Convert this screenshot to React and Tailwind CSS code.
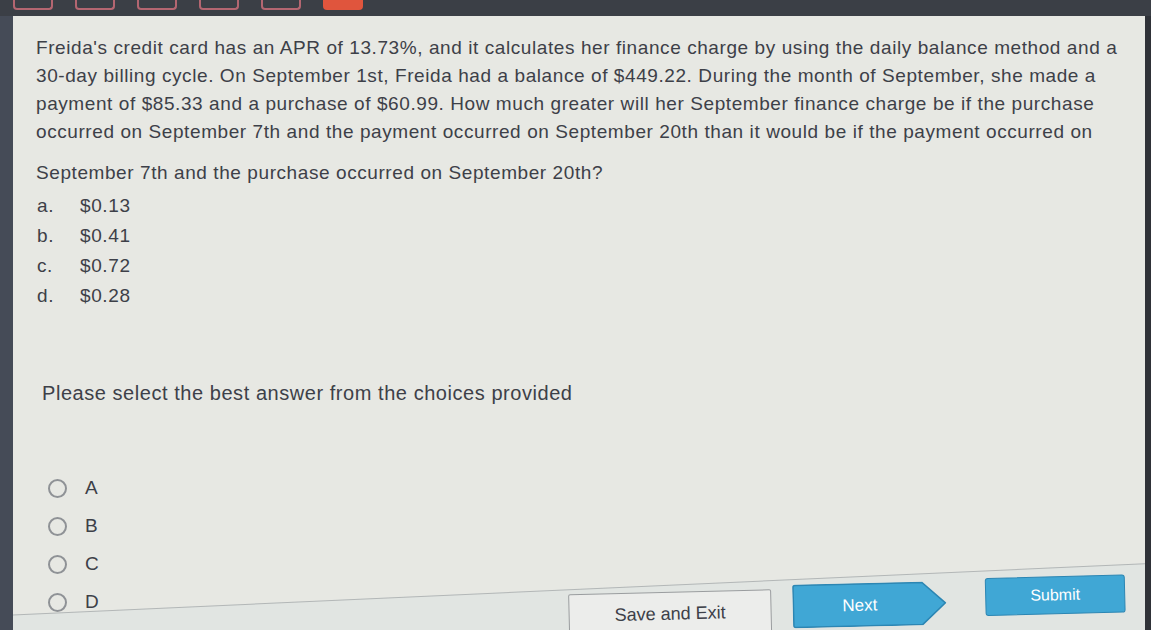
import React from "react";

const lines = [
    "Freida's credit card has an APR of 13.73%, and it calculates her finance charge by using the daily balance method and a",
    "30-day billing cycle. On September 1st, Freida had a balance of $449.22. During the month of September, she made a",
    "payment of $85.33 and a purchase of $60.99. How much greater will her September finance charge be if the purchase",
    "occurred on September 7th and the payment occurred on September 20th than it would be if the payment occurred on",
    "September 7th and the purchase occurred on September 20th?",
];

const choices = [
    { key: "a.", value: "$0.13" },
    { key: "b.", value: "$0.41" },
    { key: "c.", value: "$0.72" },
    { key: "d.", value: "$0.28" },
];

const tabs = [false, false, false, false, false, true];

export default function App() {
    return (
        <div
            className="w-[1151px] h-[630px] overflow-hidden bg-[#3b3f46] flex flex-col text-[#3d4048]"
            style={{ fontFamily: '"Liberation Sans", Arial, sans-serif' }}
        >
            {/* top tabs */}
            <div className="h-[16px] flex gap-[22px] pl-[13px] shrink-0">
                {tabs.map((active, i) => (
                    <div
                        key={i}
                        className={
                            active
                                ? "w-[40px] h-[10px] rounded-b-[4px] bg-[#e0553d]"
                                : "w-[40px] h-[10px] rounded-b-[4px] border-2 border-t-0 border-[#b46671]"
                        }
                    />
                ))}
            </div>

            <div className="flex h-[614px]">
                <div className="w-[13px] bg-[#454b57] shrink-0" />
                <div className="w-[1132px] bg-[#e7e8e3] flex flex-col overflow-hidden relative">
                    {/* question */}
                    <div className="h-[599px] pl-[23px] pt-[18px] shrink-0 relative z-10">
                        <div className="text-[19px] leading-[28px] tracking-[0.58px]">
                            {lines.map((l, i) => (
                                <div key={i} className={i === 4 ? "whitespace-nowrap mt-[13px]" : "whitespace-nowrap"}>
                                    {l}
                                </div>
                            ))}
                        </div>

                        <div className="mt-[4px] text-[19px] leading-[30px] tracking-[0.6px]">
                            {choices.map((c) => (
                                <div key={c.key} className="flex">
                                    <span className="w-[44px] pl-[1px]">{c.key}</span>
                                    <span>{c.value}</span>
                                </div>
                            ))}
                        </div>

                        <div className="mt-[68px] pl-[6px] text-[20px] leading-[28px] tracking-[0.55px]">
                            Please select the best answer from the choices provided
                        </div>

                        <div className="mt-[70px] pl-[12px] flex flex-col gap-[16px]">
                            {["A", "B", "C", "D"].map((l) => (
                                <label key={l} className="flex items-center gap-[18px] text-[19px] leading-[22px]">
                                    <span className="w-[19px] h-[19px] rounded-full border-2 border-[#8f9296]" />
                                    <span>{l}</span>
                                </label>
                            ))}
                        </div>
                    </div>

                    {/* footer, photographed at a slight tilt */}
                    <div className="absolute left-[-10px] top-[599px] w-[1160px] h-[120px] origin-top-left -rotate-[2.6deg] border-t border-[#b3b7b7] bg-[#e1e5e2]">
                        <div className="absolute left-[565px] top-[6px] w-[203px] h-[44px] rotate-[1.2deg] bg-[#ecedeb] border border-[#9a9d9f] rounded-[2px] flex items-center justify-center text-[18px] text-[#3d4048]">
                            Save and Exit
                        </div>
                        <div className="absolute left-[789px] top-[6px] w-[154px] h-[44px] rotate-[1.2deg]">
                            <svg width="154" height="44" viewBox="0 0 154 44" className="absolute inset-0">
                                <path d="M3 1 H130 L153 22 L130 43 H3 Q1 43 1 41 V3 Q1 1 3 1 Z" fill="#40a7d5" stroke="#2c86b3" strokeWidth="1.5" />
                            </svg>
                            <span className="absolute left-[50px] top-[10px] text-[17px] text-white">Next</span>
                        </div>
                        <div className="absolute left-[982px] top-[8px] w-[140px] h-[38px] rotate-[1.2deg] bg-[#40a7d5] border border-[#2c86b3] rounded-[3px] flex items-center justify-center text-[16px] text-white">
                            Submit
                        </div>
                    </div>
                </div>
                <div className="flex-1 bg-[#2f3238]" />
            </div>
        </div>
    );
}
